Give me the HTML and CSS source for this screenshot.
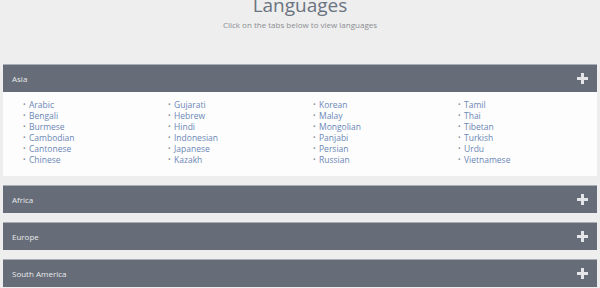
FILE: index.html
```html
<!DOCTYPE html>
<html lang="en">
<head>
    <meta charset="UTF-8">
    <title>Languages</title>
    <link rel="stylesheet" href="styles.css">
</head>
<body>
<div class="intro">
    <h1>Languages</h1>
    <p>Click on the tabs below to view languages</p>
</div>

<!--语言分组-->
<div class="panel open">
    <div class="panelHead">
        <span>Asia</span>
        <svg class="plus" width="11" height="11" viewBox="0 0 11 11"><rect x="4" y="0" width="3" height="11"/><rect x="0" y="4" width="11" height="3"/></svg>
    </div>
    <div class="panelBody">
        <ul class="langs">
            <li><a href="#">Arabic</a></li>
            <li><a href="#">Bengali</a></li>
            <li><a href="#">Burmese</a></li>
            <li><a href="#">Cambodian</a></li>
            <li><a href="#">Cantonese</a></li>
            <li><a href="#">Chinese</a></li>
        </ul>
        <ul class="langs">
            <li><a href="#">Gujarati</a></li>
            <li><a href="#">Hebrew</a></li>
            <li><a href="#">Hindi</a></li>
            <li><a href="#">Indonesian</a></li>
            <li><a href="#">Japanese</a></li>
            <li><a href="#">Kazakh</a></li>
        </ul>
        <ul class="langs">
            <li><a href="#">Korean</a></li>
            <li><a href="#">Malay</a></li>
            <li><a href="#">Mongolian</a></li>
            <li><a href="#">Panjabi</a></li>
            <li><a href="#">Persian</a></li>
            <li><a href="#">Russian</a></li>
        </ul>
        <ul class="langs">
            <li><a href="#">Tamil</a></li>
            <li><a href="#">Thai</a></li>
            <li><a href="#">Tibetan</a></li>
            <li><a href="#">Turkish</a></li>
            <li><a href="#">Urdu</a></li>
            <li><a href="#">Vietnamese</a></li>
        </ul>
    </div>
</div>

<div class="panel">
    <div class="panelHead">
        <span>Africa</span>
        <svg class="plus" width="11" height="11" viewBox="0 0 11 11"><rect x="4" y="0" width="3" height="11"/><rect x="0" y="4" width="11" height="3"/></svg>
    </div>
</div>

<div class="panel">
    <div class="panelHead">
        <span>Europe</span>
        <svg class="plus" width="11" height="11" viewBox="0 0 11 11"><rect x="4" y="0" width="3" height="11"/><rect x="0" y="4" width="11" height="3"/></svg>
    </div>
</div>

<div class="panel">
    <div class="panelHead">
        <span>South America</span>
        <svg class="plus" width="11" height="11" viewBox="0 0 11 11"><rect x="4" y="0" width="3" height="11"/><rect x="0" y="4" width="11" height="3"/></svg>
    </div>
</div>
</body>
</html>
```

FILE: styles.css
```css
body {
    margin: 0;
    background-color: #eeeeee;
    font-family: "Open Sans", "Liberation Sans", sans-serif;
    overflow: hidden;
}

.intro {
    display: flow-root;
    text-align: center;
    height: 64px;
}

.intro h1 {
    margin: -8px 0 0;
    font-size: 19px;
    font-weight: normal;
    line-height: 26px;
    color: #6b7380;
}

.intro p {
    margin: 1px 0 0;
    font-size: 8px;
    line-height: 12px;
    color: #8a8d92;
}

.panel {
    margin: 0 3px 9px;
}

.panelHead {
    height: 27px;
    padding: 0 9px;
    display: flex;
    align-items: center;
    justify-content: space-between;
    background-color: #666d78;
    border-top: 1px solid #a9aeb5;
    font-size: 8px;
    color: #e9eaec;
}

.plus {
    fill: #e3e5e8;
}

.panelBody {
    background-color: #fdfdfd;
    padding: 7px 0 11px 20px;
    display: grid;
    grid-template-columns: repeat(4, 145px);
}

.langs {
    margin: 0;
    padding: 0;
    list-style: none;
}

.langs li {
    display: flex;
    align-items: center;
    height: 11px;
    font-size: 8.5px;
    line-height: 11px;
}

.langs li:before {
    content: "\2022";
    width: 6px;
    color: #8b8f96;
    font-size: 7px;
}

.langs a {
    color: #6c87b6;
    text-decoration: none;
}
```
